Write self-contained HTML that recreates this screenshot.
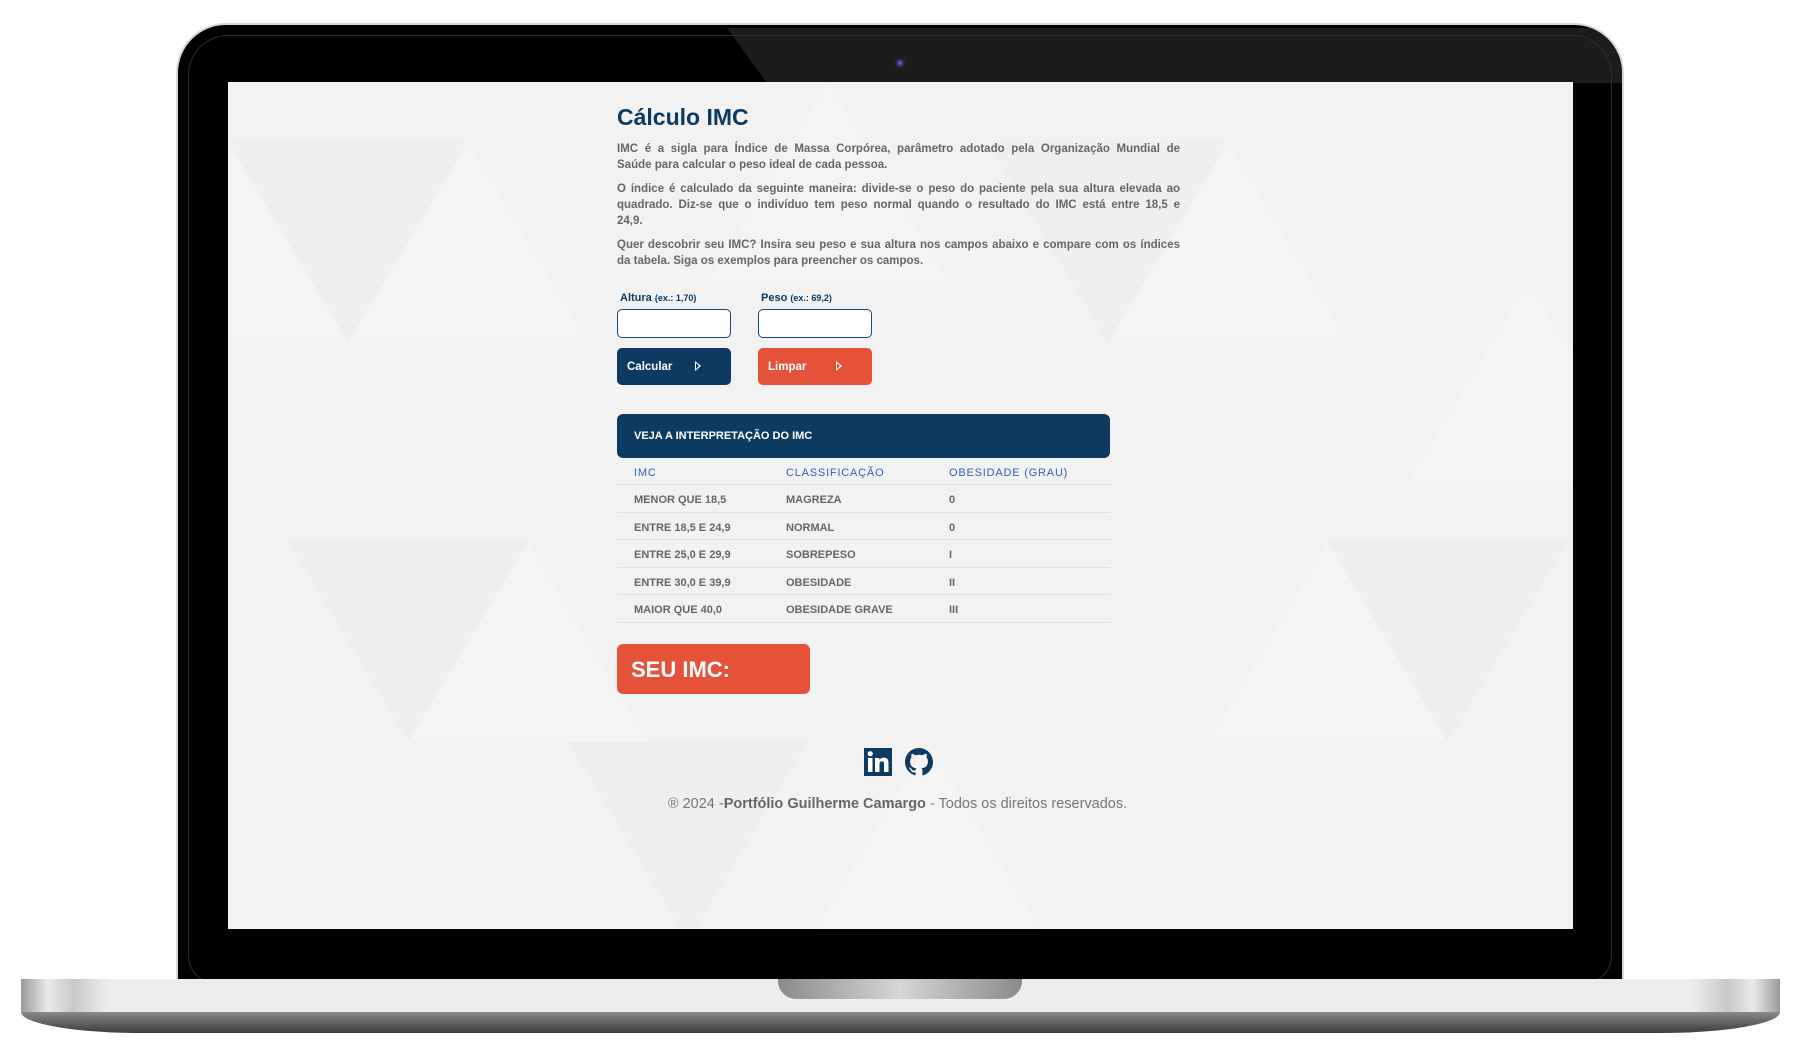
<!DOCTYPE html>
<html><head><meta charset="utf-8">
<style>
*{margin:0;padding:0;box-sizing:border-box}
body{width:1797px;height:1063px;background:#fff;position:relative;overflow:hidden;font-family:"Liberation Sans",Arial,sans-serif}
.abs{position:absolute}
#bezel{left:178px;top:25px;width:1444px;height:970px;background:#000;border-radius:48px 48px 0 0;box-shadow:0 0 0 2px #d8d8da;overflow:hidden}
#glare{left:549px;top:3px;width:900px;height:55px;background:#1c1c1c;clip-path:polygon(0 0,100% 0,100% 100%,40px 100%)}
#ring{left:10px;top:10px;width:1424px;height:950px;border:1px solid #2b2d31;border-radius:40px 40px 30px 30px}
#cam{left:895px;top:58px;width:10px;height:10px;border-radius:50%;background:radial-gradient(circle,#6a6af0 0,#3a3a90 35%,#222 60%,#444 80%,#222 100%)}
#screen{left:228px;top:82px;width:1345px;height:847px;background:#f2f2f2;overflow:hidden}
#base{left:21px;top:979px;width:1759px;height:34px;background:linear-gradient(90deg,#999 0,#e9e9e9 1.5%,#c9c9c9 3%,#eceeee 5%,#eceeee 95%,#c9c9c9 97%,#e9e9e9 98.5%,#999 100%)}
#base2{left:21px;top:1012px;width:1759px;height:21px;background:linear-gradient(#8a8a8a,#3c3c3c);border-radius:0 0 120px 120px/0 0 21px 21px}
#notch{left:778px;top:979px;width:244px;height:20px;background:linear-gradient(90deg,#8a8a8a,#d6d6d6 50%,#8a8a8a);border-radius:0 0 18px 18px}
h1{position:absolute;left:389px;top:22px;font-size:23px;color:#0d3a60;font-weight:bold}
.p{position:absolute;left:389px;width:563px;font-size:11.5px;font-weight:bold;color:#666;line-height:16px}
.p span{display:block;text-align:justify;text-align-last:justify}
.p span.l{text-align-last:left}
.lbl{font-size:11px;font-weight:bold;color:#0d3a60}
.lbl small{font-size:9px}
.in{width:114px;height:29px;border:1.5px solid #1b4a70;border-radius:5px;background:#fff}
.btn{width:114px;height:37px;border-radius:5px;color:#fff;font-weight:bold;font-size:11.5px;padding:13px 0 0 10px}
.btn i{position:absolute;left:78px;top:13px;width:0;height:0;border-left:6px solid #fff;border-top:5px solid transparent;border-bottom:5px solid transparent}
.btn i:after{content:"";position:absolute;left:-5px;top:-3px;border-left:3.5px solid currentColor;border-top:3px solid transparent;border-bottom:3px solid transparent}
.row{position:absolute;left:389px;width:493px;height:27.5px;border-bottom:1px solid #e2e2e2;font-size:11px;font-weight:bold;color:#666}
.row b{position:absolute;top:9px}
</style></head><body>
<div id="bezel" class="abs"><div id="glare" class="abs"></div><div id="ring" class="abs"></div></div>
<div id="cam" class="abs"></div>
<div id="screen" class="abs">
<svg class="abs" style="left:0;top:0" width="1345" height="847">
<g fill="#fff" opacity=".18">
<polygon points="0,60 120,260 -120,260"/><polygon points="240,60 360,260 120,260"/><polygon points="600,0 720,200 480,200"/><polygon points="1000,60 1120,260 880,260"/><polygon points="300,460 420,660 180,660"/><polygon points="1100,460 1220,660 980,660"/><polygon points="700,660 820,860 580,860"/><polygon points="1300,200 1420,400 1180,400"/>
</g>
<g fill="#e6e6e6" opacity=".25">
<polygon points="120,260 240,60 0,60"/><polygon points="880,260 1000,60 760,60"/><polygon points="180,660 300,460 60,460"/><polygon points="1220,660 1340,460 1100,460"/><polygon points="460,860 580,660 340,660"/>
</g>
</svg>
<h1>Cálculo IMC</h1>
<div class="p" style="top:59px"><span>IMC é a sigla para Índice de Massa Corpórea, parâmetro adotado pela Organização Mundial de</span><span class="l">Saúde para calcular o peso ideal de cada pessoa.</span></div>
<div class="p" style="top:99px"><span>O índice é calculado da seguinte maneira: divide-se o peso do paciente pela sua altura elevada ao</span><span>quadrado. Diz-se que o indivíduo tem peso normal quando o resultado do IMC está entre 18,5 e</span><span class="l">24,9.</span></div>
<div class="p" style="top:155px"><span>Quer descobrir seu IMC? Insira seu peso e sua altura nos campos abaixo e compare com os índices</span><span class="l">da tabela. Siga os exemplos para preencher os campos.</span></div>
<div class="abs lbl" style="left:392px;top:210px">Altura <small>(ex.: 1,70)</small></div>
<div class="abs lbl" style="left:533px;top:210px">Peso <small>(ex.: 69,2)</small></div>
<div class="abs in" style="left:389px;top:227px"></div>
<div class="abs in" style="left:530px;top:227px"></div>
<div class="abs btn" style="left:389px;top:266px;background:#0d3a60;color:#fff">Calcular<i style="color:#0d3a60"></i></div>
<div class="abs btn" style="left:530px;top:266px;background:#e5523a;color:#fff">Limpar<i style="color:#e5523a"></i></div>
<div class="abs" style="left:389px;top:332px;width:493px;height:44px;background:#0d3a60;border-radius:6px;color:#fff;font-weight:bold;font-size:11px;padding:16px 0 0 17px">VEJA A INTERPRETAÇÃO DO IMC</div>
<div class="row" style="top:376px;height:27px;color:#2d62b8;font-weight:normal;letter-spacing:.8px"><b style="left:17px;font-weight:normal">IMC</b><b style="left:169px;font-weight:normal">CLASSIFICAÇÃO</b><b style="left:332px;font-weight:normal">OBESIDADE (GRAU)</b></div>
<div class="row" style="top:403px"><b style="left:17px">MENOR QUE 18,5</b><b style="left:169px">MAGREZA</b><b style="left:332px">0</b></div>
<div class="row" style="top:430.5px"><b style="left:17px">ENTRE 18,5 E 24,9</b><b style="left:169px">NORMAL</b><b style="left:332px">0</b></div>
<div class="row" style="top:458px"><b style="left:17px">ENTRE 25,0 E 29,9</b><b style="left:169px">SOBREPESO</b><b style="left:332px">I</b></div>
<div class="row" style="top:485.5px"><b style="left:17px">ENTRE 30,0 E 39,9</b><b style="left:169px">OBESIDADE</b><b style="left:332px">II</b></div>
<div class="row" style="top:513px"><b style="left:17px">MAIOR QUE 40,0</b><b style="left:169px">OBESIDADE GRAVE</b><b style="left:332px">III</b></div>
<div class="abs" style="left:389px;top:562px;width:193px;height:50px;background:#e5523a;border-radius:6px;color:#fff;font-weight:bold;font-size:22px;padding:13px 0 0 14px">SEU IMC:</div>
<svg class="abs" style="left:636px;top:666px" width="28" height="28" viewBox="0 0 28 28"><rect width="28" height="28" fill="#0d3a60"/><rect x="4" y="10" width="4.5" height="14" fill="#fff"/><circle cx="6.2" cy="5.7" r="2.6" fill="#fff"/><path d="M11 10h4.3v2c.8-1.4 2.4-2.4 4.6-2.4 3.6 0 4.6 2.3 4.6 5.6V24h-4.5v-7.8c0-1.8-.4-2.9-2-2.9s-2.5 1.2-2.5 3V24H11z" fill="#fff"/></svg>
<svg class="abs" style="left:677px;top:666px" width="28" height="28" viewBox="0 0 16 16"><path fill="#0d3a60" d="M8 0C3.58 0 0 3.580 0 8c0 3.54 2.29 6.53 5.47 7.59.4.07.55-.17.55-.38v-1.330c-2.23.48-2.7-1.07-2.7-1.07-.36-.92-.89-1.17-.89-1.17-.73-.5.06-.49.06-.49.8.06 1.23.83 1.23.83.72 1.23 1.87.87 2.33.67.07-.52.28-.87.51-1.070-1.78-.2-3.65-.89-3.65-3.95 0-.87.31-1.59.82-2.15-.08-.2-.36-1.02.08-2.12 0 0 .67-.21 2.2.82A7.6 7.6 0 0 1 8 3.86c.68 0 1.36.09 2 .27 1.53-1.04 2.2-.82 2.2-.82.44 1.1.16 1.92.08 2.12.51.56.82 1.27.82 2.15 0 3.07-1.87 3.75-3.65 3.95.29.25.54.73.54 1.48v2.2c0 .21.15.46.55.38A8 8 0 0 0 16 8c0-4.42-3.58-8-8-8z"/></svg>
<div class="abs" style="left:0;width:1339px;top:714px;text-align:center;font-size:14.5px;color:#777">® 2024 -<b style="color:#666">Portfólio Guilherme Camargo</b> - Todos os direitos reservados.</div>
</div>
<div id="base" class="abs"></div>
<div id="base2" class="abs"></div>
<div id="notch" class="abs"></div>
</body></html>
